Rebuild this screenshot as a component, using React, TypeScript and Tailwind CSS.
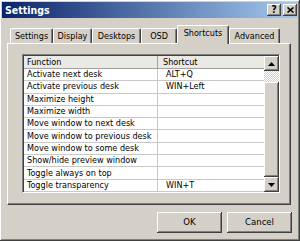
import React from 'react';

const font = { fontFamily: "'DejaVu Sans Condensed', 'Liberation Sans', sans-serif" };

const tabs = [
    { label: 'Settings', w: 'w-[43px]' },
    { label: 'Display', w: 'w-[39px]' },
    { label: 'Desktops', w: 'w-[49px]' },
    { label: 'OSD', w: 'w-[36px]' },
    { label: 'Shortcuts', w: 'w-[52px]', active: true },
    { label: 'Advanced', w: 'w-[51px]' },
];

const rows = [
    ['Activate next desk', 'ALT+Q'],
    ['Activate previous desk', 'WIN+Left'],
    ['Maximize height', ''],
    ['Maximize width', ''],
    ['Move window to next desk', ''],
    ['Move window to previous desk', ''],
    ['Move window to some desk', ''],
    ['Show/hide preview window', ''],
    ['Toggle always on top', ''],
    ['Toggle transparency', 'WIN+T'],
];

const raised =
    'shadow-[inset_-1px_-1px_#404040,inset_1px_1px_#ffffff,inset_-2px_-2px_#808080,inset_2px_2px_#d4d0c8]';

const Arrow = ({ down = false }: { down?: boolean }) => (
    <svg width="7" height="4" viewBox="0 0 7 4">
        <path d={down ? 'M0 0h7L3.5 4z' : 'M3.5 0L7 4H0z'} fill="#000" />
    </svg>
);

export default function App() {
    return (
        <div
            className={`w-[300px] h-[241px] bg-[#d4d0c8] p-[2px] flex flex-col text-black ${raised}`}
            style={font}
        >
            {/* Title bar */}
            <div className="h-[16px] shrink-0 flex items-center justify-between pl-[3px] pr-[1px] bg-[linear-gradient(to_right,#0a246a,#a6caf0)]">
                <span className="text-white font-bold text-[10.5px] leading-none">Settings</span>
                <div className="flex gap-[2px]">
                    <div className={`w-[14px] h-[12px] bg-[#d4d0c8] flex items-center justify-center text-[10px] font-bold leading-none ${raised}`}>
                        ?
                    </div>
                    <div className={`w-[14px] h-[12px] bg-[#d4d0c8] flex items-center justify-center ${raised}`}>
                        <svg width="7" height="6" viewBox="0 0 7 6">
                            <path d="M0.5 0.5L6.5 5.5M6.5 0.5L0.5 5.5" stroke="#000" strokeWidth="1.6" />
                        </svg>
                    </div>
                </div>
            </div>

            {/* Tabs */}
            <div className="pl-[5px] pr-[7px] pt-[7px] shrink-0">
                <div className="flex items-end pl-[3px] h-[18px] relative z-10">
                    {tabs.map((t) => (
                        <div
                            key={t.label}
                            className={`${t.w} flex items-center justify-center text-[9px] leading-none rounded-t-[2px] border-l border-t border-white border-r border-r-[#404040] shadow-[inset_-1px_0_#808080] bg-[#d4d0c8] ${
                                t.active ? 'h-[19px] -mb-[1px] pb-[3px]' : 'h-[15px]'
                            }`}
                        >
                            {t.label}
                        </div>
                    ))}
                </div>

                {/* Panel */}
                <div className="h-[162px] border-l border-t border-white border-r border-b border-r-[#404040] border-b-[#404040] shadow-[inset_-1px_-1px_#808080] pt-[10px] pl-[14px] pr-[10px] pb-[11px]">
                    <div className="h-full flex border border-[#808080] border-r-white border-b-white shadow-[inset_1px_1px_#404040] p-[1px] pr-0 pb-0 overflow-hidden">
                        <div className="flex-1 flex flex-col bg-white text-[9px] leading-none min-h-0">
                            <div className="h-[13px] shrink-0 flex bg-[#ebe9e4] border-b border-[#a0a0a0]">
                                <div className="w-[134px] pl-[3px] flex items-center border-r border-[#a0a0a0]">Function</div>
                                <div className="flex-1 pl-[5px] flex items-center">Shortcut</div>
                            </div>
                            <div className="flex-1 flex flex-col min-h-0">
                                {rows.map(([fn, key]) => (
                                    <div key={fn} className="flex-1 min-h-0 flex border-b border-[#c8c8c8]">
                                        <div className="w-[134px] pl-[3px] flex items-center border-r border-[#c8c8c8] whitespace-nowrap overflow-hidden">
                                            {fn}
                                        </div>
                                        <div className="flex-1 pl-[8px] flex items-center">{key}</div>
                                    </div>
                                ))}
                            </div>
                        </div>

                        {/* Scrollbar */}
                        <div className="w-[15px] flex flex-col min-h-0">
                            <div className={`h-[15px] shrink-0 bg-[#d4d0c8] flex items-center justify-center ${raised}`}>
                                <Arrow />
                            </div>
                            <div className="h-[11px] shrink-0 bg-[repeating-conic-gradient(#ffffff_0_25%,#d4d0c8_0_50%)] bg-[length:2px_2px]" />
                            <div className={`flex-1 min-h-0 bg-[#d4d0c8] ${raised}`} />
                            <div className={`h-[15px] shrink-0 bg-[#d4d0c8] flex items-center justify-center ${raised}`}>
                                <Arrow down />
                            </div>
                        </div>
                    </div>
                </div>
            </div>

            {/* Buttons */}
            <div className="flex justify-end gap-[5px] pr-[6px] pt-[7px]">
                <button className={`w-[65px] h-[21px] bg-[#d4d0c8] text-[9.5px] ${raised}`}>OK</button>
                <button className={`w-[65px] h-[21px] bg-[#d4d0c8] text-[9.5px] ${raised}`}>Cancel</button>
            </div>
        </div>
    );
}
